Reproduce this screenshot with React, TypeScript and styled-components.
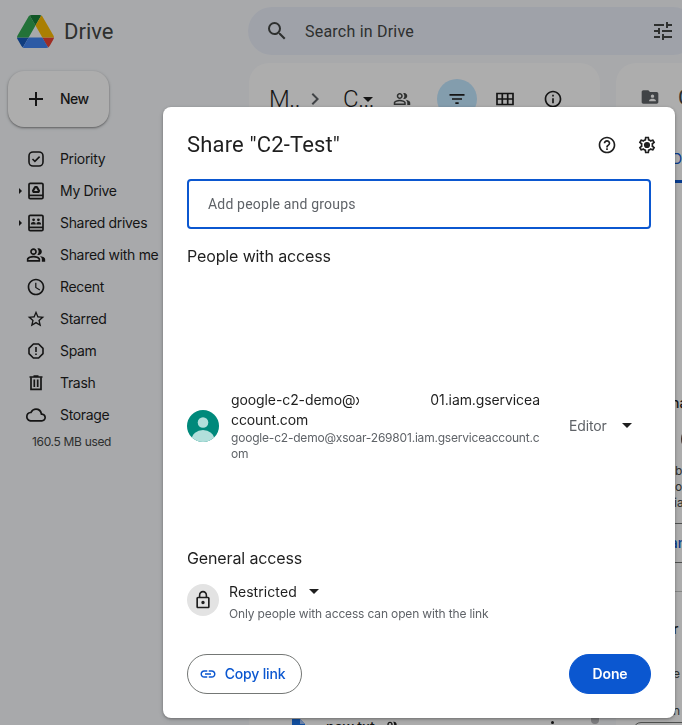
import React from 'react';
import styled, { createGlobalStyle } from 'styled-components';
import {
  MdAdd,
  MdChevronRight,
  MdFilterList,
  MdFolderShared,
  MdHelpOutline,
  MdLink,
  MdLockOutline,
  MdOutlineCloud,
  MdOutlineInfo,
  MdOutlinePeopleAlt,
  MdSchedule,
  MdSearch,
  MdStarOutline,
  MdTune,
} from 'react-icons/md';

const GlobalStyle = createGlobalStyle`
  * { box-sizing: border-box; }
  html, body { margin: 0; height: 100%; overflow: hidden; }
  body { font-family: Inter, Roboto, sans-serif; color: #1f1f1f; background: #f8fafd; }
  button { font: inherit; margin: 0; padding: 0; border: 0; background: none; color: inherit; }
  svg { display: block; flex: none; }
`;

/* ---------- page behind the dialog ---------- */

const Page = styled.div`
  display: grid;
  grid-template-columns: 248px 449px;
  grid-template-rows: 63px 1fr;
  width: 682px;
  height: 725px;
  overflow: hidden;
`;

const Brand = styled.div`
  display: flex;
  align-items: center;
  gap: 10px;
  padding: 0 0 1px 17px;
  font: 400 22px Roboto, sans-serif;
  color: #444746;
`;

const SearchBar = styled.div`
  display: flex;
  align-items: center;
  height: 48px;
  margin-top: 7px;
  padding: 0 22px 0 17px;
  border-radius: 24px;
  background: #ebeffa;
  color: #444746;
  font: 400 16px Roboto, sans-serif;
  letter-spacing: 0.22px;
`;

const SearchText = styled.span`
  flex: 1;
  padding-left: 16px;
`;

const Sidebar = styled.nav`
  display: flex;
  flex-direction: column;
  padding: 8px 0 0 8px;
`;

const NewButton = styled.button`
  display: flex;
  align-items: center;
  gap: 12px;
  width: 101px;
  height: 56px;
  padding: 0 0 1px 16px;
  border-radius: 16px;
  background: #fff;
  font-size: 14px;
  font-weight: 500;
  letter-spacing: -0.6px;
  box-shadow: 0 1px 2px rgba(0, 0, 0, 0.35), 0 1px 4px rgba(0, 0, 0, 0.15);
`;

const NavList = styled.div`
  display: flex;
  flex-direction: column;
  margin-top: 16px;
`;

const NavItem = styled.div`
  display: grid;
  grid-template-columns: 16px 24px auto;
  align-items: center;
  height: 32px;
  font-size: 14px;
  letter-spacing: -0.32px;
  white-space: nowrap;

  & > span { padding: 0 0 2px 12px; }
`;

const NavIcon = styled.i<{ $end?: boolean }>`
  display: flex;
  justify-content: ${(p) => (p.$end ? 'flex-end' : 'center')};
  padding-right: ${(p) => (p.$end ? 2 : 0)}px;
`;

const Usage = styled.div`
  padding: 3px 0 0 24px;
  font-size: 12px;
  line-height: 16px;
  letter-spacing: -0.33px;
  color: #444746;
`;

const Content = styled.div`
  display: flex;
  gap: 16px;
  padding-left: 1px;
`;

const Panel = styled.section<{ $width: number }>`
  display: flex;
  flex: none;
  flex-direction: column;
  width: ${(p) => p.$width}px;
  height: 700px;
  border-radius: 20px;
  background: #fff;
`;

const Toolbar = styled.div`
  display: flex;
  align-items: center;
  height: 72px;
  padding-left: 20px;
  color: #1f1f1f;
`;

const Crumb = styled.span<{ $width: number; $gap?: number }>`
  position: relative;
  width: ${(p) => p.$width}px;
  margin-left: ${(p) => p.$gap ?? 0}px;
  font: 300 24px Roboto, sans-serif;
  letter-spacing: -0.4px;
  white-space: nowrap;
`;

const CrumbCaret = styled.span`
  position: absolute;
  left: 20px;
  top: 12px;
`;

const ToolSlot = styled.span<{ $width: number; $gap?: number; $active?: boolean }>`
  display: flex;
  align-items: center;
  justify-content: center;
  flex: none;
  width: ${(p) => p.$width}px;
  height: 40px;
  margin-left: ${(p) => p.$gap ?? 0}px;
  border-radius: 20px;
  background: ${(p) => (p.$active ? '#c2e7ff' : 'transparent')};
`;

const FileRow = styled.div`
  display: flex;
  align-items: flex-start;
  margin-top: 583px;
  padding-left: 43px;
  font-size: 14px;
  font-weight: 500;
`;

const FileName = styled.span`
  width: 58px;
  margin: 1px 0 0 20px;
  line-height: 16px;
`;

const Shared = styled.span`
  width: 20px;
  margin-top: 1px;
`;

const MoreDots = styled.span`
  width: 3px;
  height: 3px;
  margin: 3px 0 0 147px;
  border-radius: 2px;
  background: #1f1f1f;
`;

const ScrollThumb = styled.span`
  width: 8px;
  height: 6px;
  margin: 0 0 0 37px;
  border-radius: 0 0 4px 4px;
  background: #b8b8bb;
`;

const DetailsHead = styled.div`
  display: flex;
  align-items: center;
  gap: 18px;
  height: 68px;
  padding-left: 24px;
  font: 400 22px Roboto, sans-serif;
  color: #444746;
`;

const DetailsTab = styled.div`
  height: 52px;
  margin-left: 24px;
  padding: 18px 0 0 32px;
  border-bottom: 3px solid #0b57d0;
  color: #0b57d0;
  font-size: 14px;
  line-height: 20px;
`;

const DetailLine = styled.div<{ $top?: number; $indent: number; $strong?: boolean }>`
  margin-top: ${(p) => p.$top ?? 0}px;
  padding-left: ${(p) => p.$indent}px;
  height: 16px;
  line-height: 16px;
  font-size: ${(p) => (p.$strong ? 14 : 12)}px;
  font-weight: ${(p) => (p.$strong ? 500 : 400)};
  color: ${(p) => (p.$strong ? '#1f1f1f' : '#444746')};
  white-space: nowrap;
`;

const Owner = styled.div`
  width: 24px;
  height: 24px;
  margin: 16px 0 12px 65px;
  border-radius: 12px;
  background: #5d4037;
`;

const OutlineAction = styled.div`
  height: 40px;
  margin: 12px 0 0 24px;
  padding-left: 16px;
  border: 1px solid #747775;
  border-radius: 20px;
  color: #0b57d0;
  font-size: 14px;
  font-weight: 500;
  line-height: 38px;
`;

const Divider = styled.div`
  height: 1px;
  margin-top: 28px;
  background: #c4c7c5;
`;

const AccessBox = styled.div`
  height: 40px;
  margin: 3px 0 0 17px;
  border: 1px solid #747775;
  border-radius: 8px;
`;

/* ---------- share dialog ---------- */

const Scrim = styled.div`
  position: fixed;
  inset: 0;
  padding: 107px 0 0 163px;
  background: rgba(0, 0, 0, 0.32);
`;

const Dialog = styled.div`
  display: flex;
  flex-direction: column;
  width: 512px;
  height: 611px;
  padding: 18px 24px 24px;
  border-radius: 8px;
  background: #fff;
  box-shadow: 0 1px 3px rgba(0, 0, 0, 0.3), 0 2px 6px rgba(0, 0, 0, 0.12);
`;

const DialogHeader = styled.header`
  display: flex;
  align-items: center;
  gap: 20px;
  height: 40px;
  margin-right: -6px;
`;

const Title = styled.h1`
  flex: 1;
  margin: 0;
  padding-bottom: 2px;
  font: 400 22px Roboto, sans-serif;
  letter-spacing: 0.16px;
`;

const PeopleField = styled.div`
  display: flex;
  align-items: center;
  height: 50px;
  margin-top: 14px;
  padding-left: 19px;
  border: 2px solid #0b57d0;
  border-radius: 4px;
  color: #5f6368;
  font: 400 14px Roboto, sans-serif;
  letter-spacing: 0.18px;
`;

const SectionTitle = styled.h2<{ $top: number }>`
  margin: ${(p) => p.$top}px 0 0;
  font-size: 16px;
  font-weight: 400;
  line-height: 24px;
  letter-spacing: -0.13px;
`;

const PersonRow = styled.div`
  display: flex;
  align-items: center;
  height: 72px;
  margin-top: 122px;
`;

const PersonText = styled.div`
  flex: none;
  width: 338px;
  padding-left: 12px;
  white-space: nowrap;
`;

const PersonName = styled.div`
  display: flex;
  height: 20px;
  font-size: 14px;
  line-height: 20px;
  letter-spacing: -0.1px;
`;

const ClippedInitial = styled.span`
  width: 4px;
  margin-right: 71px;
  overflow: hidden;
`;

const Secondary = styled.div`
  font-size: 12px;
  line-height: 16px;
  letter-spacing: -0.2px;
  color: #5f6368;
`;

const RoleButton = styled.button`
  display: flex;
  align-items: center;
  gap: 15px;
  margin-left: 12px;
  padding-bottom: 1px;
  font-size: 14px;
  letter-spacing: -0.15px;
  color: #5f6368;
`;

const AccessRow = styled.div`
  display: flex;
  align-items: center;
  gap: 10px;
  height: 44px;
  margin-top: 8px;
`;

const LockBadge = styled.span`
  display: flex;
  align-items: center;
  justify-content: center;
  width: 32px;
  height: 32px;
  border-radius: 16px;
  background: #e3e3e3;
`;

const AccessLevel = styled.div`
  display: flex;
  align-items: center;
  gap: 12px;
  height: 22px;
  margin-top: 2px;
  font-size: 14px;
  letter-spacing: 0.08px;
`;

const AccessHint = styled(Secondary)`
  margin-top: 3px;
  letter-spacing: -0.15px;
`;

const DialogFooter = styled.footer`
  display: flex;
  justify-content: space-between;
  margin-top: auto;
`;

const FooterButton = styled.button<{ $primary?: boolean }>`
  display: flex;
  align-items: center;
  justify-content: center;
  gap: 8px;
  width: ${(p) => (p.$primary ? 82 : 115)}px;
  height: 40px;
  padding: 0 ${(p) => (p.$primary ? 0 : 5)}px 1px 0;
  border: 1px solid ${(p) => (p.$primary ? '#0b57d0' : '#747775')};
  border-radius: 20px;
  background: ${(p) => (p.$primary ? '#0b57d0' : '#fff')};
  color: ${(p) => (p.$primary ? '#fff' : '#0b57d0')};
  font-size: 14px;
  font-weight: ${(p) => (p.$primary ? 600 : 500)};
  letter-spacing: -0.17px;
`;

/* ---------- drawings ---------- */

const DriveLogo = () => (
  <svg width="37" height="33" viewBox="0 0 87.3 78">
    <path fill="#185abc" d="m6.6 66.85 3.85 6.65c.8 1.4 1.95 2.5 3.3 3.3l13.75-23.8h-27.5c0 1.55.4 3.1 1.2 4.5z" />
    <path fill="#34a853" d="m43.65 25-13.75-23.8c-1.35.8-2.5 1.9-3.3 3.3l-25.4 44a9.06 9.06 0 0 0 -1.2 4.5h27.5z" />
    <path fill="#ea4335" d="m73.55 76.8c1.35-.8 2.5-1.9 3.3-3.3l1.6-2.75 7.65-13.25c.8-1.4 1.2-2.95 1.2-4.5h-27.5l5.85 11.5z" />
    <path fill="#188038" d="m43.65 25 13.75-23.8c-1.35-.8-2.9-1.2-4.5-1.2h-18.5c-1.6 0-3.15.45-4.5 1.2z" />
    <path fill="#4285f4" d="m59.8 53h-32.3l-13.75 23.8c1.35.8 2.9 1.2 4.5 1.2h50.8c1.6 0 3.15-.45 4.5-1.2z" />
    <path fill="#fbbc04" d="m73.4 26.5-12.7-22c-.8-1.4-1.95-2.5-3.3-3.3l-13.75 23.8 16.15 28h27.45c0-1.55-.4-3.1-1.2-4.5z" />
  </svg>
);

const CaretDown = () => (
  <svg width="10" height="5" viewBox="0 0 10 5"><path fill="#1f1f1f" d="M0 0h10L5 5z" /></svg>
);

const CaretRight = () => (
  <svg width="3" height="6" viewBox="0 0 3 6"><path fill="#1f1f1f" d="M0 0l3 3-3 3z" /></svg>
);

const PriorityIcon = () => (
  <svg width="16" height="16" viewBox="0 0 16 16" fill="none" stroke="#1f1f1f" strokeWidth="1.6">
    <rect x="1" y="1" width="14" height="14" rx="4" />
    <path d="M4.5 8l2.4 2.4 4.7-4.8" />
  </svg>
);

const DriveBox = ({ children }: { children: React.ReactNode }) => (
  <svg width="16" height="18" viewBox="0 0 16 18" fill="none" stroke="#1f1f1f" strokeWidth="1.7">
    <rect x="1" y="1.3" width="14" height="15.4" rx="1.3" />
    <path d="M1 13.4h14" />
    {children}
  </svg>
);

const MyDriveIcon = () => (
  <DriveBox>
    <path d="M7.2 5h1.6L11 8.8l-.6 1.2H5.6L5 8.8z" strokeLinejoin="round" strokeWidth="2.2" />
  </DriveBox>
);

const SharedDriveIcon = () => (
  <DriveBox>
    <g fill="#1f1f1f" stroke="none">
      <circle cx="5.6" cy="5.8" r="1.4" />
      <circle cx="10.4" cy="5.8" r="1.4" />
      <path d="M2.8 10.6c0-1.7 1-2.5 2.6-2.5s2.4.8 2.4 2.5zM8.4 10.6c0-1.7.8-2.5 2.2-2.5s2.6.8 2.6 2.5z" />
    </g>
  </DriveBox>
);

const SpamIcon = () => (
  <svg width="16" height="16" viewBox="0 0 16 16" fill="none" stroke="#1f1f1f" strokeWidth="1.6">
    <path d="M5.4 1h5.2L15 5.4v5.2L10.6 15H5.4L1 10.6V5.4z" strokeLinejoin="round" />
    <path d="M8 4v5M8 10.4v1.7" />
  </svg>
);

const TrashIcon = () => (
  <svg width="14" height="16" viewBox="0 0 14 16" fill="none" stroke="#1f1f1f" strokeWidth="1.7">
    <path d="M.5 2h13M4.5 1h5" />
    <path d="M2 2.2V14.4h10V2.2M5.3 4.5v7.5M8.7 4.5v7.5" />
  </svg>
);

const GridIcon = () => (
  <svg width="18" height="14" viewBox="0 0 18 14" fill="none" stroke="#1f1f1f" strokeWidth="1.7">
    <path d="M1 1.5h16v11H1zM1 7h16M6.3 1.5v11M11.7 1.5v11" />
  </svg>
);

const GearIcon = () => (
  <svg width="20" height="20" viewBox="0 0 24 24" fill="#1f1f1f">
    <path d="M19.43 12.98c.04-.32.07-.64.07-.98 0-.34-.03-.66-.07-.98l2.11-1.65c.19-.15.24-.42.12-.64l-2-3.46c-.09-.16-.26-.25-.44-.25-.06 0-.12.01-.17.03l-2.49 1c-.52-.4-1.08-.73-1.69-.98l-.38-2.65C14.46 2.18 14.25 2 14 2h-4c-.25 0-.46.18-.49.42l-.38 2.65c-.61.25-1.17.59-1.69.98l-2.49-1c-.06-.02-.12-.03-.18-.03-.17 0-.34.09-.43.25l-2 3.46c-.13.22-.07.49.12.64l2.11 1.65c-.04.32-.07.65-.07.98 0 .33.03.66.07.98l-2.11 1.65c-.19.15-.24.42-.12.64l2 3.46c.09.16.26.25.44.25.06 0 .12-.01.17-.03l2.49-1c.52.4 1.08.73 1.69.98l.38 2.65c.03.24.24.42.49.42h4c.25 0 .46-.18.49-.42l.38-2.65c.61-.25 1.17-.59 1.69-.98l2.49 1c.06.02.12.03.18.03.17 0 .34-.09.43-.25l2-3.46c.12-.22.07-.49-.12-.64l-2.11-1.65zm-1.98-1.71c.04.31.05.52.05.73 0 .21-.02.43-.05.73l-.14 1.13.89.7 1.08.84-.7 1.21-1.27-.51-1.04-.42-.9.68c-.43.32-.84.56-1.25.73l-1.06.43-.16 1.13-.2 1.35h-1.4l-.19-1.35-.16-1.13-1.06-.43c-.43-.18-.83-.41-1.23-.71l-.91-.7-1.06.43-1.27.51-.7-1.21 1.08-.84.89-.7-.14-1.13c-.03-.31-.05-.54-.05-.74s.02-.43.05-.73l.14-1.13-.89-.7-1.08-.84.7-1.21 1.27.51 1.04.42.9-.68c.43-.32.84-.56 1.25-.73l1.06-.43.16-1.13.2-1.35h1.39l.19 1.35.16 1.13 1.06.43c.43.18.83.41 1.23.71l.91.7 1.06-.43 1.27-.51.7 1.21-1.07.85-.89.7.14 1.13z" />
    <circle cx="12" cy="12" r="3.7" />
  </svg>
);

const Avatar = () => (
  <svg width="32" height="32" viewBox="0 0 32 32">
    <clipPath id="avatar-disc"><circle cx="16" cy="16" r="16" /></clipPath>
    <g clipPath="url(#avatar-disc)">
      <path fill="#00897b" d="M0 0h32v32H0z" />
      <circle cx="16" cy="12.5" r="5.3" fill="#b2dfdb" />
      <ellipse cx="16" cy="29" rx="11.2" ry="9" fill="#b2dfdb" />
    </g>
  </svg>
);

const DocIcon = () => (
  <svg width="14" height="16" viewBox="0 0 14 16">
    <path fill="#1a73e8" d="M0 1h8l5 5v10H0z" />
    <path fill="#a1c2fa" d="M8 1v5h5z" />
  </svg>
);

/* ---------- data ---------- */

const navItems: { label: string; icon: React.ReactNode; expandable?: boolean }[] = [
  { label: 'Priority', icon: <PriorityIcon /> },
  { label: 'My Drive', icon: <MyDriveIcon />, expandable: true },
  { label: 'Shared drives', icon: <SharedDriveIcon />, expandable: true },
  { label: 'Shared with me', icon: <MdOutlinePeopleAlt size={20} /> },
  { label: 'Recent', icon: <MdSchedule size={20} /> },
  { label: 'Starred', icon: <MdStarOutline size={20} /> },
  { label: 'Spam', icon: <SpamIcon /> },
  { label: 'Trash', icon: <TrashIcon /> },
  { label: 'Storage', icon: <MdOutlineCloud size={20} /> },
];

const FilesPanel = () => (
  <Panel $width={351}>
    <Toolbar>
      <Crumb $width={36}>M..</Crumb>
      <ToolSlot $width={20}><MdChevronRight size={24} color="#5f6368" /></ToolSlot>
      <Crumb $width={43} $gap={18}>C...<CrumbCaret><CaretDown /></CrumbCaret></Crumb>
      <ToolSlot $width={32}><MdOutlinePeopleAlt size={18} color="#444746" /></ToolSlot>
      <ToolSlot $width={40} $gap={19} $active><MdFilterList size={20} /></ToolSlot>
      <ToolSlot $width={56}><GridIcon /></ToolSlot>
      <ToolSlot $width={40}><MdOutlineInfo size={20} /></ToolSlot>
    </Toolbar>
    <FileRow>
      <DocIcon />
      <FileName>new.txt</FileName>
      <Shared><MdOutlinePeopleAlt size={16} /></Shared>
      <MoreDots />
      <ScrollThumb />
    </FileRow>
  </Panel>
);

const DetailsPanel = () => (
  <Panel $width={100}>
    <DetailsHead><MdFolderShared size={20} color="#5f6368" />C2</DetailsHead>
    <DetailsTab>Details</DetailsTab>
    <DetailLine $top={212} $indent={55} $strong>nage</DetailLine>
    <Owner />
    <DetailLine $indent={59}>b</DetailLine>
    <DetailLine $indent={59}>on</DetailLine>
    <DetailLine $indent={58}>iam</DetailLine>
    <OutlineAction>Manage</OutlineAction>
    <Divider />
    <DetailLine $top={29} $indent={57} $strong>r</DetailLine>
    <DetailLine $top={29} $indent={57}>e</DetailLine>
    <DetailLine $top={21} $indent={57}>n</DetailLine>
    <AccessBox />
  </Panel>
);

const ShareDialog = () => (
  <Dialog role="dialog">
    <DialogHeader>
      <Title>Share "C2-Test"</Title>
      <MdHelpOutline size={20} />
      <GearIcon />
    </DialogHeader>
    <PeopleField>Add people and groups</PeopleField>
    <SectionTitle $top={15}>People with access</SectionTitle>
    <PersonRow>
      <Avatar />
      <PersonText>
        <PersonName>google-c2-demo@<ClippedInitial>x</ClippedInitial>01.iam.gservicea</PersonName>
        <PersonName>ccount.com</PersonName>
        <Secondary>google-c2-demo@xsoar-269801.iam.gserviceaccount.c</Secondary>
        <Secondary>om</Secondary>
      </PersonText>
      <RoleButton>Editor<CaretDown /></RoleButton>
    </PersonRow>
    <SectionTitle $top={84}>General access</SectionTitle>
    <AccessRow>
      <LockBadge><MdLockOutline size={20} /></LockBadge>
      <div>
        <AccessLevel>Restricted<CaretDown /></AccessLevel>
        <AccessHint>Only people with access can open with the link</AccessHint>
      </div>
    </AccessRow>
    <DialogFooter>
      <FooterButton><MdLink size={18} />Copy link</FooterButton>
      <FooterButton $primary>Done</FooterButton>
    </DialogFooter>
  </Dialog>
);

export default function App() {
  return (
    <>
      <GlobalStyle />
      <Page>
        <Brand><DriveLogo />Drive</Brand>
        <SearchBar>
          <MdSearch size={24} />
          <SearchText>Search in Drive</SearchText>
          <MdTune size={24} />
        </SearchBar>
        <Sidebar>
          <NewButton><MdAdd size={24} />New</NewButton>
          <NavList>
            {navItems.map((item) => (
              <NavItem key={item.label}>
                <NavIcon $end>{item.expandable && <CaretRight />}</NavIcon>
                <NavIcon>{item.icon}</NavIcon>
                <span>{item.label}</span>
              </NavItem>
            ))}
          </NavList>
          <Usage>160.5 MB used</Usage>
        </Sidebar>
        <Content>
          <FilesPanel />
          <DetailsPanel />
        </Content>
      </Page>
      <Scrim><ShareDialog /></Scrim>
    </>
  );
}
